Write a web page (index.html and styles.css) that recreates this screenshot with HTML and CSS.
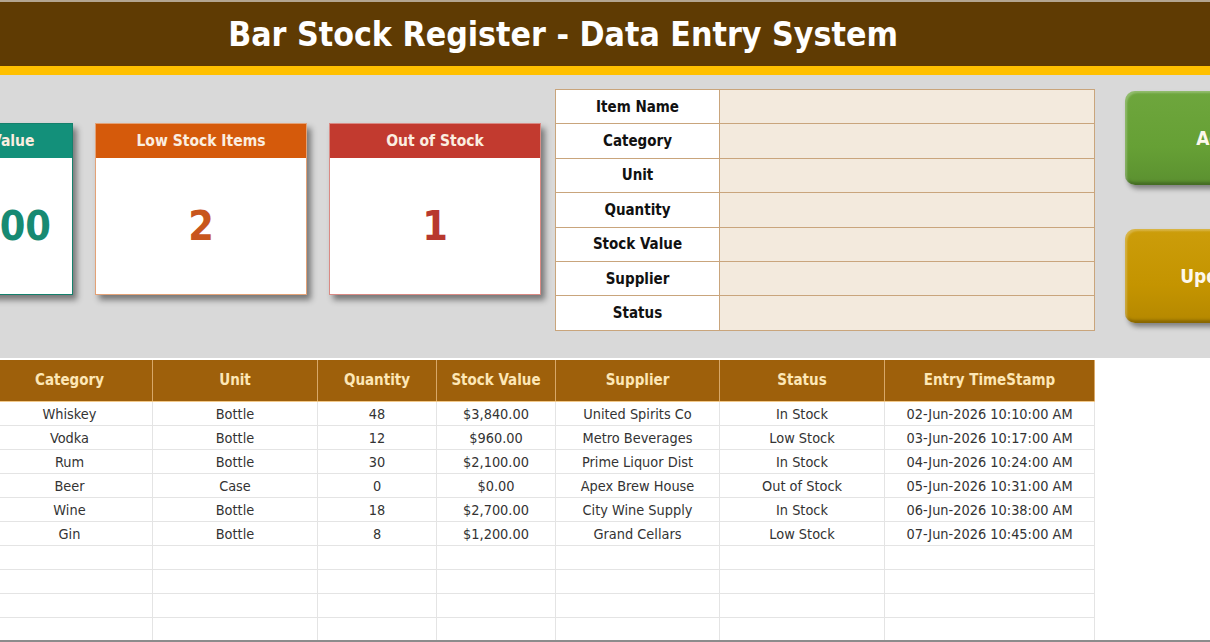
FILE: index.html
```html
<!DOCTYPE html>
<html lang="en">
<head>
    <meta charset="UTF-8">
    <meta name="viewport" content="width=device-width, initial-scale=1.0">
    <title>Bar Stock Register - Data Entry System</title>
    <link rel="stylesheet" href="styles.css">
</head>
<body>
    <header class="title-bar">
        <h1>Bar Stock Register - Data Entry System</h1>
    </header>

    <div class="sheet">
        <section class="panel">
            <div class="cards">
                <div class="card card-teal">
                    <div class="card-head">Total Stock Value</div>
                    <div class="card-value">$10,800</div>
                </div>
                <div class="card card-orange">
                    <div class="card-head">Low Stock Items</div>
                    <div class="card-value">2</div>
                </div>
                <div class="card card-red">
                    <div class="card-head">Out of Stock</div>
                    <div class="card-value">1</div>
                </div>
            </div>

            <table class="entry-form">
                <tr><th>Item Name</th><td></td></tr>
                <tr><th>Category</th><td></td></tr>
                <tr><th>Unit</th><td></td></tr>
                <tr><th>Quantity</th><td></td></tr>
                <tr><th>Stock Value</th><td></td></tr>
                <tr><th>Supplier</th><td></td></tr>
                <tr><th>Status</th><td></td></tr>
            </table>

            <div class="actions">
                <button class="btn btn-add">Add</button>
                <button class="btn btn-update">Update</button>
            </div>
        </section>

        <table class="register">
            <colgroup>
                <col class="col-item">
                <col class="col-category">
                <col class="col-unit">
                <col class="col-qty">
                <col class="col-value">
                <col class="col-supplier">
                <col class="col-status">
                <col class="col-stamp">
            </colgroup>
            <thead>
                <tr>
                    <th>Item Name</th>
                    <th>Category</th>
                    <th>Unit</th>
                    <th>Quantity</th>
                    <th>Stock Value</th>
                    <th>Supplier</th>
                    <th>Status</th>
                    <th>Entry TimeStamp</th>
                </tr>
            </thead>
            <tbody>
                <tr><td>Black Label</td><td>Whiskey</td><td>Bottle</td><td>48</td><td>$3,840.00</td><td>United Spirits Co</td><td>In Stock</td><td>02-Jun-2026 10:10:00 AM</td></tr>
                <tr><td>Smirnoff</td><td>Vodka</td><td>Bottle</td><td>12</td><td>$960.00</td><td>Metro Beverages</td><td>Low Stock</td><td>03-Jun-2026 10:17:00 AM</td></tr>
                <tr><td>Bacardi</td><td>Rum</td><td>Bottle</td><td>30</td><td>$2,100.00</td><td>Prime Liquor Dist</td><td>In Stock</td><td>04-Jun-2026 10:24:00 AM</td></tr>
                <tr><td>Heineken</td><td>Beer</td><td>Case</td><td>0</td><td>$0.00</td><td>Apex Brew House</td><td>Out of Stock</td><td>05-Jun-2026 10:31:00 AM</td></tr>
                <tr><td>Merlot</td><td>Wine</td><td>Bottle</td><td>18</td><td>$2,700.00</td><td>City Wine Supply</td><td>In Stock</td><td>06-Jun-2026 10:38:00 AM</td></tr>
                <tr><td>Bombay</td><td>Gin</td><td>Bottle</td><td>8</td><td>$1,200.00</td><td>Grand Cellars</td><td>Low Stock</td><td>07-Jun-2026 10:45:00 AM</td></tr>
                <tr><td></td><td></td><td></td><td></td><td></td><td></td><td></td><td></td></tr>
                <tr><td></td><td></td><td></td><td></td><td></td><td></td><td></td><td></td></tr>
                <tr><td></td><td></td><td></td><td></td><td></td><td></td><td></td><td></td></tr>
                <tr><td></td><td></td><td></td><td></td><td></td><td></td><td></td><td></td></tr>
            </tbody>
        </table>
    </div>

    <div class="sheet-edge"></div>
</body>
</html>
```

FILE: styles.css
```css
* {
    margin: 0;
    padding: 0;
    box-sizing: border-box;
}

body {
    font-family: "DejaVu Sans Condensed", "DejaVu Sans", Roboto, sans-serif;
    background: #fff;
    overflow: hidden;
    height: 642px;
}

/* Title */
.title-bar {
    height: 75px;
    background: #5f3b03;
    border-top: 2px solid #b3a590;
    border-bottom: 9px solid #ffc000;
    display: flex;
    align-items: center;
    justify-content: center;
    padding-right: 84px;
}

.title-bar h1 {
    color: #fff;
    font-size: 33.6px;
    font-weight: 700;
}

/* Sheet is scrolled a little to the right, so the first column is hidden */
.sheet {
    margin-left: -214px;
    width: 1530px;
}

.panel {
    background: #d9d9d9;
    height: 283px;
    padding-left: 75px;
    display: flex;
    align-items: flex-start;
}

/* KPI cards */
.cards {
    display: flex;
    flex-shrink: 0;
    gap: 22px;
    margin-top: 48px;
}

.card {
    width: 212px;
    height: 172px;
    background: #fff;
    border: 1px solid;
    display: flex;
    flex-direction: column;
    box-shadow: 4px 5px 6px rgba(0,0,0,0.45);
}

.card-head {
    height: 34px;
    display: flex;
    align-items: center;
    justify-content: center;
    color: #fbeee0;
    font-size: 15.5px;
    font-weight: 700;
}

.card-value {
    flex: 1;
    display: flex;
    align-items: center;
    justify-content: center;
    font-size: 41px;
    font-weight: 700;
}

.card-teal { border-color: #14806c; }
.card-teal .card-head { background: #13907a; }
.card-teal .card-value { color: #178a72; }

.card-orange { border-color: #e3a277; }
.card-orange .card-head { background: #d55a0b; }
.card-orange .card-value { color: #c8561c; }

.card-red { border-color: #d98a84; }
.card-red .card-head { background: #c23a2f; }
.card-red .card-value { color: #b8382e; }

/* Entry form */
.entry-form {
    flex-shrink: 0;
    margin-left: 14px;
    margin-top: 14px;
    width: 540px;
    border-collapse: collapse;
}

.entry-form tr {
    height: 34.4px;
}

.entry-form th {
    width: 164px;
    background: #fff;
    border: 1px solid #c9a57c;
    font-size: 15px;
    font-weight: 700;
    color: #111;
}

.entry-form td {
    background: #f3eadd;
    border: 1px solid #c9a57c;
}

/* Buttons */
.actions {
    flex-shrink: 0;
    margin-left: 30px;
    margin-top: 16px;
    display: flex;
    flex-direction: column;
    gap: 44px;
}

.btn {
    width: 180px;
    height: 94px;
    border: none;
    border-radius: 10px;
    font-family: inherit;
    font-size: 19px;
    font-weight: 700;
    color: #fdf8ec;
    box-shadow: inset 2px 2px 2px rgba(255,255,255,0.25), inset -2px -3px 3px rgba(0,0,0,0.25), 3px 4px 5px rgba(0,0,0,0.4);
}

.btn-add {
    background: linear-gradient(180deg, #6ea63d, #66a035 60%, #5b9030);
}

.btn-update {
    background: linear-gradient(180deg, #cc9d0a, #c49400 60%, #b58800);
}

/* Register table */
.register {
    margin-top: 2px;
    width: 1308px;
    table-layout: fixed;
    border-collapse: collapse;
}

.col-item { width: 200px; }
.col-category { width: 166px; }
.col-unit { width: 165px; }
.col-qty { width: 119px; }
.col-value { width: 119px; }
.col-supplier { width: 164px; }
.col-status { width: 165px; }
.col-stamp { width: 210px; }

.register th {
    height: 41px;
    background: #9e600b;
    color: #fde7b6;
    font-size: 15px;
    font-weight: 700;
    border-right: 1px solid #d8a868;
    border-bottom: 1px solid #f2c98a;
}

.register td {
    height: 24px;
    padding-top: 2px;
    text-align: center;
    font-size: 14.4px;
    color: #333;
    border: 1px solid #e4e4e4;
    white-space: nowrap;
}

.sheet-edge {
    position: fixed;
    left: 0;
    right: 0;
    bottom: 0;
    height: 2px;
    background: #8c8c8c;
}
```
